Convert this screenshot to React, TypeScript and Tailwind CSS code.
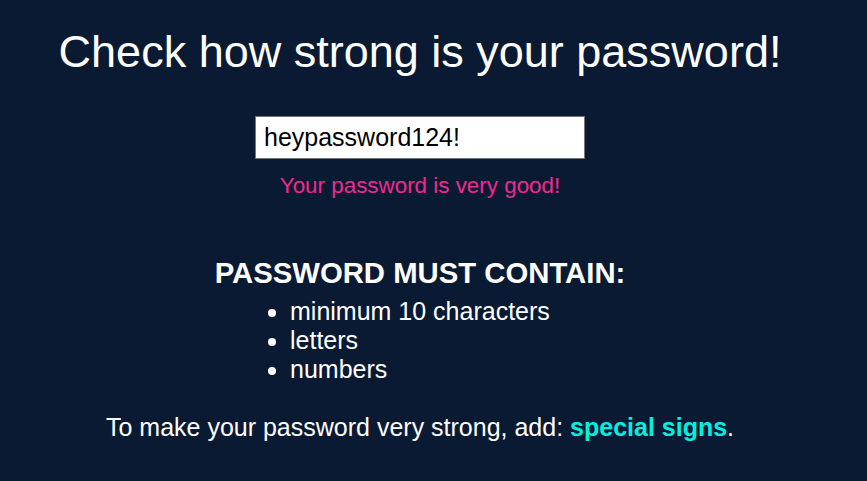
import { useState } from 'react';

const rules = ['minimum 10 characters', 'letters', 'numbers'];

export default function App() {
  const [password, setPassword] = useState('heypassword124!');

  return (
    <div className="min-h-[481px] w-full bg-[#0b1a33] text-white font-['Liberation_Sans',Arial,sans-serif]">
      <div className="w-[840px] flex flex-col items-center">
        <h1 className="mt-[26px] text-[45px] leading-[52px] font-normal">Check how strong is your password!</h1>
        <input
          type="text"
          value={password}
          onChange={(e) => setPassword(e.target.value)}
          className="mt-[38px] w-[330px] h-[43px] bg-white text-black border border-[#767676] px-2 text-[25px] outline-none"
        />
        <p className="mt-[14px] text-[22.4px] leading-[26px] text-[#ee2a90]">Your password is very good!</p>
        <h2 className="mt-[57px] text-[29.3px] leading-[34px] font-bold">PASSWORD MUST CONTAIN:</h2>
        <ul className="self-start ml-[250px] mt-[7px] pl-10 list-disc text-[25px] leading-[29px]">
          {rules.map((r) => (
            <li key={r}>{r}</li>
          ))}
        </ul>
        <p className="mt-[29px] text-[25px] leading-[29px]">
          To make your password very strong, add: <span className="font-bold text-[#00f0e0]">special signs</span>.
        </p>
      </div>
    </div>
  );
}
